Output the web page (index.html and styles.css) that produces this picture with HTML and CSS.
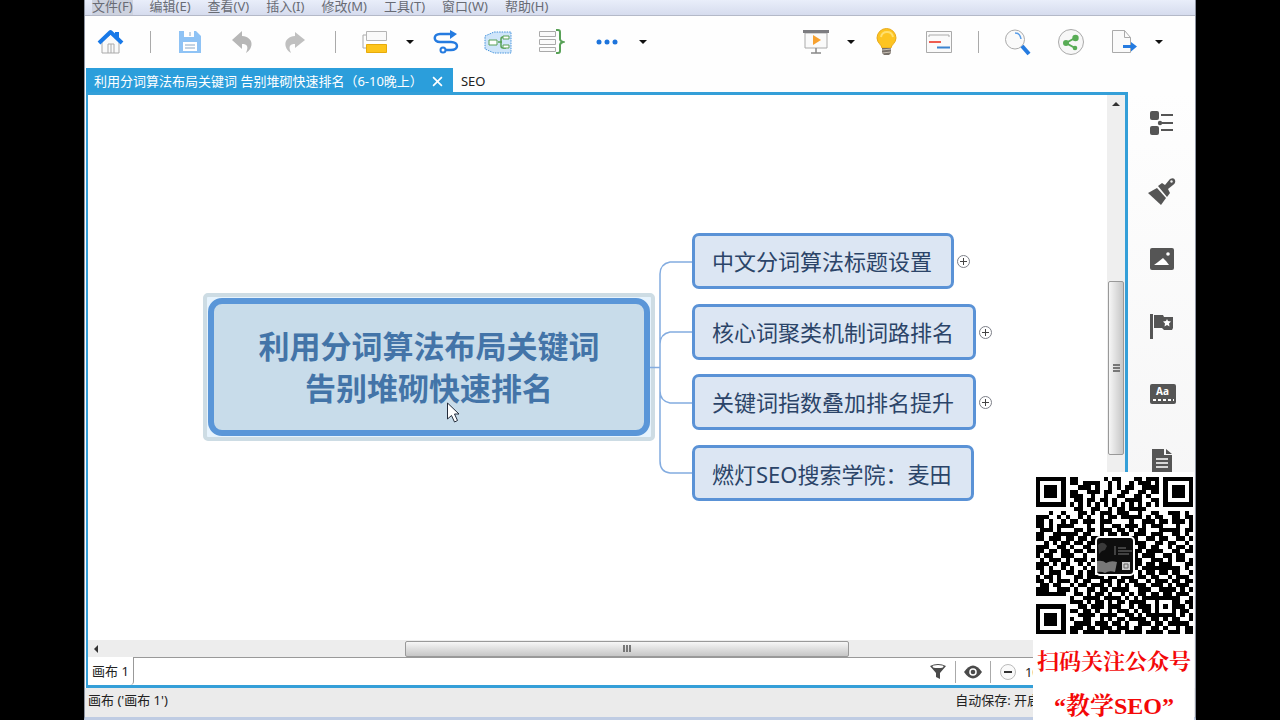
FILE: index.html
```
<!DOCTYPE html>
<html lang="zh-CN">
<head>
<meta charset="utf-8">
<title>画布 1</title>
<link rel="stylesheet" href="styles.css">
</head>
<body>
<div class="app">
  <nav class="menubar">
    <button class="menu menu-active">文件(F)</button>
    <button class="menu">编辑(E)</button>
    <button class="menu">查看(V)</button>
    <button class="menu">插入(I)</button>
    <button class="menu">修改(M)</button>
    <button class="menu">工具(T)</button>
    <button class="menu">窗口(W)</button>
    <button class="menu">帮助(H)</button>
  </nav>

  <div class="toolbar">
    <div class="tools">
      <button class="tool" aria-label="主页"><svg viewBox="0 0 28 28"><path d="M5 13v12h17V13L14 6z" fill="#fafafa" stroke="#aaa"/><path d="M11 25v-9h6v9M14 16v9" fill="none" stroke="#aaa"/><path d="M2 15 13.500 4 25 15M20 4v6" fill="none" stroke="#1879e8" stroke-width="4" stroke-linejoin="round"/></svg></button>
      <span class="sep"></span>
      <button class="tool" aria-label="保存"><svg viewBox="0 0 28 28"><path d="M3 3h17l5 5v17H3z" fill="#8fc3f5"/><path d="M8 3h10v6H8zM7 14h14v9H7z" fill="#fff"/><path d="M14 4v4M9 17h10M9 20h10" stroke="#8aa8c5"/></svg></button>
      <button class="tool" aria-label="撤销"><svg viewBox="0 0 28 28"><path d="M3 12 13 3v5c12 1 12 12 4 17 3-7 1-9-4-9v5z" fill="#b7b7b7"/></svg></button>
      <button class="tool" aria-label="重做"><svg viewBox="0 0 28 28"><path d="M23 12 13 4v4C1 9 1 20 9 25c-3-7-1-9 4-9v4z" fill="#c0c0c0"/></svg></button>
      <span class="sep"></span>
      <button class="tool" aria-label="主题"><svg viewBox="0 0 28 28"><path d="M5 7H2v13h4" fill="none" stroke="#aaa"/><path d="M5.500 3.500h20v9h-20z" fill="#fafafa" stroke="#b5b5b5"/><path d="M5.500 16.500h20v8h-20z" fill="#fdc51c" stroke="#e7ab0b"/></svg></button>
      <button class="caret" aria-label="更多主题"></button>
      <button class="tool" aria-label="联系"><svg viewBox="0 0 28 28"><path d="M22 6H9c-7 0-7 8 0 8h11c8 0 8 8 0 8h-6" fill="none" stroke="#257be0" stroke-width="2.500"/><path d="m19 2 7 4-7 5z" fill="#257be0"/><circle cx="12" cy="22" r="2.500" fill="#fff" stroke="#257be0" stroke-width="2"/></svg></button>
      <button class="tool" aria-label="外框"><svg viewBox="0 0 28 28"><path d="M1 8 10 4h17v21H10L1 21z" fill="#cfe5fa" stroke="#4593dc" stroke-dasharray="1.500 1"/><path d="M14 14h4M22 9h-3q-2 0-2 2v7q0 2 2 2h3" fill="none" stroke="#58a157" stroke-width="1.500"/><path d="M5 12h8v5H5zM19 8h6v3h-6zM19 17h6v3h-6z" fill="#fff" stroke="#58a157"/></svg></button>
      <button class="tool" aria-label="概要"><svg viewBox="0 0 28 28"><path d="M2.500 3.500h16v5h-16zM2.500 11.500h16v5h-16zM2.500 19.500h16v4h-16z" fill="#fafafa" stroke="#aaa"/><path d="M19 2h2q2 0 2 2v7q0 2 3 3-3 1-3 3v6q0 2-2 2h-2" fill="none" stroke="#58a157" stroke-width="2"/></svg></button>
      <button class="tool tool-more" aria-label="更多"><svg viewBox="0 0 28 28"><g fill="#1d74dc"><circle cx="7" cy="14" r="2.500"/><circle cx="15" cy="14" r="2.500"/><circle cx="23" cy="14" r="2.500"/></g></svg></button>
      <button class="caret" aria-label="更多选项"></button>
    </div>
    <div class="tools">
      <button class="tool" aria-label="演示"><svg viewBox="0 0 28 28"><path d="M3 5h22v15H3z" fill="#fafafa" stroke="#aaa"/><path d="M1 2h26v3H1z" fill="#7c7c80"/><path d="m11 7 8 5-8 5z" fill="#f7a12f"/><path d="M14 20v5M9 25h10" stroke="#888" stroke-width="1.500"/></svg></button>
      <button class="caret" aria-label="演示选项"></button>
      <button class="tool" aria-label="头脑风暴"><svg viewBox="0 0 28 28"><path d="M10 20c0-3-5-5-5-10a9 9 0 0 1 19 0c0 5-5 7-5 10z" fill="#fdc421" stroke="#e8aa1a"/><path d="M9 9q1-5 6-5 5 0 6 5" fill="none" stroke="#ffe070" stroke-width="2"/><path d="M10 20h9v5l-2 2h-5l-2-2z" fill="#77706a"/><path d="m10 22 9-1m-9 4 9-1" stroke="#c8c0b5"/></svg></button>
      <button class="tool" aria-label="甘特图"><svg viewBox="0 0 28 28"><path d="M1.500 3.500h25v21h-25z" fill="#fafafa" stroke="#aaa"/><path d="M4 9V7h20v2" fill="none" stroke="#aaa"/><path d="M4 14h12" stroke="#ee5c50" stroke-width="2"/><path d="M12 19.500h13" stroke="#3b83cf" stroke-width="2"/></svg></button>
      <span class="sep"></span>
      <button class="tool" aria-label="搜索"><svg viewBox="0 0 28 28"><circle cx="11" cy="11.500" r="9.500" fill="#fafafa" stroke="#aaa"/><path d="M11 5q5 0 6 6" fill="none" stroke="#5a9ee8" stroke-width="1.500"/><path d="m18 18 7 8" stroke="#257be0" stroke-width="4"/></svg></button>
      <button class="tool" aria-label="分享"><svg viewBox="0 0 28 28"><circle cx="14" cy="14" r="12.500" fill="#f7f7f7" stroke="#aaa"/><path d="m18 10-9 5 9 5" fill="none" stroke="#58ac55" stroke-width="2"/><g fill="#58ac55"><circle cx="18.500" cy="10" r="3.200"/><circle cx="9" cy="15" r="3"/><circle cx="18" cy="20" r="2.300"/></g></svg></button>
      <button class="tool" aria-label="导出"><svg viewBox="0 0 28 28"><path d="M2.500 2.500h12l6 7v15h-18z" fill="#fafafa" stroke="#aaa"/><path d="M14.500 2.500v7h6" fill="none" stroke="#aaa"/><path d="M13 18.500h10" stroke="#257be0" stroke-width="3"/><path d="m21 14 6 4.500-6 5z" fill="#257be0"/></svg></button>
      <button class="caret" aria-label="导出选项"></button>
    </div>
  </div>

  <div class="tabs">
    <div class="tab tab-active"><span>利用分词算法布局关键词 告别堆砌快速排名（6-10晚上）</span><button class="close" aria-label="关闭"><svg viewBox="0 0 10 10"><path d="m1 1 8 8m0-8-8 8" stroke="#fff" stroke-width="1.500"/></svg></button></div>
    <div class="tab">SEO</div>
  </div>

  <div class="workspace">
    <main class="editor">
      <div class="stage">
        <div class="canvas">
          <div class="root"><div class="root-box">利用分词算法布局关键词<br>告别堆砌快速排名</div></div>
          <svg class="links" viewBox="0 0 44 240"><path d="M0 120.500h10M43 15H20Q10 17 10 27v187q0 11 10 12h23M43 85H20q-10 2-10 12M43 156H20q-10-2-10-12" fill="none" stroke="#83ace0" stroke-width="1.500"/></svg>
          <div class="topic t1">中文分词算法标题设置<button class="expand" aria-label="展开"></button></div>
          <div class="topic t2">核心词聚类机制词路排名<button class="expand" aria-label="展开"></button></div>
          <div class="topic t3">关键词指数叠加排名提升<button class="expand" aria-label="展开"></button></div>
          <div class="topic t4">燃灯SEO搜索学院<span class="mid">：</span>麦田</div>
          <svg class="cursor" viewBox="0 0 14 22"><path d="M1.500 1v16l4-3.500 3 6.500 3-1.500-3-6.500H13z" fill="#fff" stroke="#222b3a"/></svg>
        </div>
        <div class="vscroll"><span class="arrow-up"></span><div class="vthumb"><i></i><i></i><i></i></div></div>
      </div>
      <div class="hscroll"><span class="arrow-left"></span><div class="hthumb"><i></i><i></i><i></i></div></div>
      <div class="sheets">
        <button class="sheet">画布 1</button>
        <div class="sheet-tools">
          <button class="mini" aria-label="筛选"><svg viewBox="0 0 18 18"><path d="M1 3q8-4 16 0l-6 7v6l-4-2v-4z" fill="#4a4a4a"/><ellipse cx="9" cy="3.500" rx="5.500" ry="1.500" fill="#fff"/></svg></button>
          <span class="mini-sep"></span>
          <button class="mini" aria-label="显示"><svg viewBox="0 0 18 18"><path d="M0 9q9-13 18 0-9 13-18 0z" fill="#4a4a4a"/><circle cx="9" cy="9" r="3.800" fill="#fff"/><circle cx="9" cy="9" r="2.300" fill="#4a4a4a"/></svg></button>
          <span class="mini-sep"></span>
          <button class="mini" aria-label="缩小"><svg viewBox="0 0 18 18"><circle cx="9" cy="9" r="7.500" fill="#fafafa" stroke="#bbb"/><path d="M5 9h8" stroke="#333" stroke-width="2"/></svg></button>
          <span>100%</span>
        </div>
      </div>
    </main>
    <aside class="side">
      <button class="panel" aria-label="大纲"><svg viewBox="0 0 28 28"><g fill="#555"><rect x="2" y="2" width="9" height="9" rx="2"/><rect x="2" y="17" width="9" height="9" rx="2"/><circle cx="12" cy="14" r="2.200"/><path d="M13 5h12v2H13zM14 13h11v2H14zM13 20h12v2H13z"/></g></svg></button>
      <button class="panel" aria-label="格式"><svg viewBox="0 0 28 28"><path d="m0 16 9-5 9 10-5 7z" fill="#555"/><path d="m10 9 4-3 3 2 5-6q4-2 5 1 1 3-2 5l-5 4 2 4-3 4z" fill="#555"/><circle cx="23.500" cy="4.500" r="1.200" fill="#eee"/></svg></button>
      <button class="panel" aria-label="图片"><svg viewBox="0 0 28 28"><rect x="2" y="3" width="24" height="22" rx="2" fill="#555"/><path d="m6 20 4-3 5-4 3 3 3 4z" fill="#fff"/><circle cx="20" cy="9" r="1.800" fill="#fff"/></svg></button>
      <button class="panel" aria-label="图标"><svg viewBox="0 0 28 28"><path d="M2 1h3v25H2zM6 2h9l1 2h9v11l-1 2h-8l-2-2H6z" fill="#555"/><path d="m19 6 1 2 3 .500-2 2 .500 3-2.500-1.500-2.500 1.500.500-3-2-2 3-.500z" fill="#fff"/></svg></button>
      <button class="panel" aria-label="风格"><svg viewBox="0 0 28 28"><rect x="2" y="3" width="26" height="20" rx="2" fill="#555"/><text x="8" y="14" class="aa">Aa</text><path d="M5 19h21" stroke="#fff" stroke-width="2" stroke-dasharray="3 2"/></svg></button>
      <button class="panel" aria-label="备注"><svg viewBox="0 0 28 28"><path d="M4 0h12v6h8v20H4zM18 0l6 5h-6z" fill="#555"/><path d="M8 10h12M8 14h12M8 18h12" stroke="#fff" stroke-width="1.500"/></svg></button>
    </aside>
  </div>

  <footer class="status"><span>画布 ('画布 1')</span><span>自动保存: 开启</span></footer>
</div>

<section class="promo">
  <div class="code">
    <svg id="qr" class="qr" viewBox="0 0 37 37" shape-rendering="crispEdges" role="img" aria-label="二维码"></svg>
    <svg class="logo" viewBox="0 0 40 40"><rect x="1" y="1" width="38" height="38" rx="4" fill="#0d0d0d" stroke="#fff" stroke-width="2"/><path d="M3 9q5-5 9 1l-2 4-3 1-3 3z" fill="#3a3a3a"/><path d="M2 25q6-1 9 2 5-3 11-1l-2 10q-6-2-10 1-4-2-8-1z" fill="#777"/><path d="M23 12h8M23 15h14M23 18h11M20 10v9" stroke="#777"/><rect x="27" y="26" width="8" height="8" fill="#ccc"/><path d="M29 28h4v4h-4z" fill="none" stroke="#666"/></svg>
  </div>
  <p>扫码关注公众号</p>
  <p class="name">“教学SEO”</p>
</section>
<script src="qr.js"></script>
</body>
</html>
```
FILE: styles.css
```
* { box-sizing: border-box; }
body {
  margin: 0;
  background: #000;
  color: #222;
  font: 13px/18px "Noto Sans", "Noto Sans CJK SC", sans-serif;
  position: relative;
}
button { border: 0; padding: 0; background: none; font: inherit; color: inherit; }
svg { display: block; }
.app {
  margin: 0 84px;
  min-height: 100vh;
  display: flex;
  flex-direction: column;
  background: #fefefe;
  border: solid #8d93a0;
  border-width: 0 1px;
  border-bottom: 3px solid #bfcce3;
}
.menubar {
  display: flex;
  gap: 17px;
  height: 16px;
  padding-left: 7px;
  background: linear-gradient(#e9eefa, #d6dcee);
  border-bottom: 1px solid #b4b9c8;
  color: #686b74;
}
.menu { line-height: 12px; height: 15px; padding-bottom: 3px; white-space: nowrap; }
.menu-active { background: #cdd2df; }
.toolbar {
  display: flex;
  justify-content: space-between;
  height: 52px;
  padding: 0 40px 0 12px;
}
.tools { display: flex; align-items: center; gap: 25px; }
.tool { width: 28px; height: 28px; }
.tool-more { width: 32px; padding-left: 2px; }
.tool svg { width: 28px; height: 28px; }
.sep { width: 1px; height: 22px; background: #aaa; }
.caret { width: 12px; height: 12px; margin: 0 -10px; }
.caret::before {
  content: "";
  display: block;
  width: 0;
  margin: auto;
  border: 4px solid transparent;
  border-top-color: #111;
  border-bottom: 0;
}
.tabs { display: flex; height: 24px; padding-left: 1px; white-space: nowrap; }
.tab { display: flex; align-items: center; padding: 2px 8px 0; }
.tab-active {
  gap: 9px;
  padding-right: 10px;
  background: #2b9edb;
  color: #fff;
  font-family: "Noto Sans", "Noto Sans CJK SC", sans-serif;
}
.close svg { width: 11px; height: 11px; }
.workspace { flex: 1; display: flex; padding-left: 1px; }
.editor {
  flex: 1;
  min-width: 0;
  display: flex;
  flex-direction: column;
  border: 3px solid #349fd8;
  border-width: 3px 3px 3px 2px;
}
.stage { flex: 1; display: flex; }
.canvas { flex: 1; position: relative; background: #fff; }
.root {
  position: absolute;
  left: 115px;
  top: 198px;
  width: 452px;
  height: 148px;
  padding: 1px;
  background: #e6f3fd;
  border: 4px solid #cddce4;
  border-radius: 5px;
}
.root-box {
  height: 100%;
  border: 6px solid #5a96d8;
  border-radius: 14px;
  background: #c8dcea;
  color: #4374a8;
  font-size: 31px;
  font-weight: 700;
  line-height: 42px;
  text-align: center;
  padding-top: 21px;
}
.topic {
  position: absolute;
  left: 604px;
  height: 56px;
  padding: 0 19px 0 17px;
  border: 3px solid #5a92d6;
  border-radius: 7px;
  background: #dce6f3;
  color: #2b4468;
  font-size: 22px;
  line-height: 50px;
  white-space: nowrap;
}
.mid { font-family: "Noto Sans CJK TC", sans-serif; }
.t1 { top: 138px; }
.t2 { top: 209px; }
.t3 { top: 279px; }
.t4 { top: 350px; }
.expand {
  position: absolute;
  right: -19px;
  top: 19px;
  width: 13px;
  height: 13px;
  border: 1px solid #7d8088;
  border-radius: 50%;
  background:
    linear-gradient(#444, #444) center / 7px 1px no-repeat,
    linear-gradient(#444, #444) center / 1px 7px no-repeat,
    #fff;
}
.links { position: absolute; left: 562px; top: 152px; width: 44px; height: 240px; }
.cursor { position: absolute; left: 358px; top: 307px; width: 14px; height: 22px; }
.vscroll { width: 18px; background: #efefef; display: flex; flex-direction: column; align-items: center; padding-top: 7px; }
.arrow-up { border: 4px solid transparent; border-top: 0; border-bottom-color: #333; }
.vthumb {
  display: flex;
  flex-direction: column;
  justify-content: center;
  align-items: center;
  gap: 1px;
  width: 16px;
  height: 174px;
  margin-top: 175px;
  background: linear-gradient(90deg, #f6f6f6, #c6c6c6);
  border: 1px solid #999;
  border-radius: 2px;
}
.vthumb i { width: 7px; height: 2px; background: #777; }
.hscroll { display: flex; align-items: center; height: 17px; background: #ededed; padding-left: 6px; }
.arrow-left { border: 4px solid transparent; border-left: 0; border-right-color: #333; }
.hthumb {
  display: flex;
  justify-content: center;
  align-items: center;
  gap: 1px;
  width: 444px;
  height: 16px;
  margin-left: 307px;
  background: linear-gradient(#f6f6f6, #c6c6c6);
  border: 1px solid #999;
  border-radius: 2px;
}
.hthumb i { width: 2px; height: 7px; background: #777; }
.sheets { display: flex; justify-content: space-between; height: 28px; background: #fff; }
.sheet { padding: 0 4px; border-right: 1px solid #999; border-radius: 0 0 4px 0; }
.sheet-tools { flex: 1; display: flex; justify-content: flex-end; align-items: center; gap: 8px; padding-right: 67px; border-top: 1px solid #999; }
.mini, .mini svg { width: 18px; height: 18px; }
.mini-sep { width: 1px; height: 22px; background: #aaa; }
.side {
  width: 67px;
  display: flex;
  flex-direction: column;
  align-items: center;
  gap: 40px;
  padding-top: 17px;
  background: linear-gradient(#fefefe, #f2f2f3);
}
.panel, .panel svg { width: 28px; height: 28px; }
.aa { font: 700 10px "Noto Sans", sans-serif; fill: #fff; }
.status { display: flex; justify-content: space-between; height: 29px; padding: 3px 155px 0 3px; background: #ebebeb; }
.promo {
  position: absolute;
  right: 86px;
  bottom: 0;
  width: 161px;
  height: 248px;
  padding: 5px 2px 0 3px;
  background: #fff;
  color: #f40808;
  text-align: center;
  font: 700 22px/44px "Liberation Serif", "Noto Serif CJK SC", "Noto Sans CJK SC", serif;
  white-space: nowrap;
}
.promo p { margin: 0; }
.promo .name { font-size: 24px; }
.code { display: grid; place-items: center; margin-bottom: 6px; }
.qr, .logo { grid-area: 1 / 1; }
.qr { width: 157px; height: 157px; }
.logo { width: 40px; height: 40px; }
```
FILE: qr.js
```
const rows = [
  "1111111011000000101100011011101111111",
  "1000001011011110010100101110101000001",
  "1011101000111010010101100111101011101",
  "1011101011001110110011001101101011101",
  "1011101011100100100110011010001011101",
  "1000001001101101101001111001101000001",
  "1111111010101010101010101010101111111",
  "0000000001100110010110111100000000000",
  "0001001000110101110111001001100111010",
  "1110010100101001011011111010110011011",
  "1101001011011101110000100111011011101",
  "1101011110001001001101110101110001001",
  "0111010001101101110110101100011111011",
  "1100111111011001011011011101110011010",
  "1101110110110110010010110011011001101",
  "0010101101101101101101011100110110010",
  "1110011010011001101011001101100101101",
  "1101101101101100000000011011110011011",
  "1011001110010000000000110111001101100",
  "0101110101110100000000011001110101101",
  "1110101100101000000000111011011100011",
  "1101001010010110000000010111111111010",
  "0101110110101101001101101011011011001",
  "1011010001101111011011101101100101110",
  "1101011101011001110110110010111011011",
  "0110110010110111010101011101110101110",
  "1110011101001101101111001110011110101",
  "1111111001101011010010101101101101110",
  "0000000010011110111101010111111111001",
  "0000000011101011010110111100100011011",
  "1111111000110111011100101110101011101",
  "1000001011011010010111010110100010110",
  "1011101000111101111001101011111110101",
  "1011101010011001010110111101101011001",
  "1011101001111011101101001110110111110",
  "1000001011101101110111011001101001011",
  "1111111011011111011101111011110111011"
];
document.getElementById("qr").innerHTML = rows.map((row, y) =>
  [...row].map((cell, x) => cell === "1" ? `<rect x="${x}" y="${y}" width="1" height="1"/>` : "").join("")
).join("");
```
